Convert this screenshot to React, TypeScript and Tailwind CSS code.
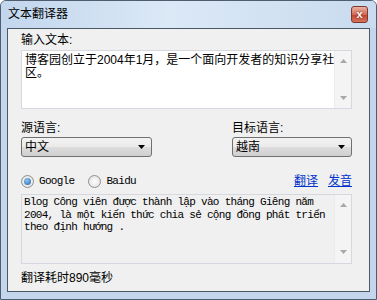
import { useState } from "react";

const cjk = { fontFamily: '"Liberation Sans", "Noto Sans CJK SC", sans-serif' };
const mono = { fontFamily: '"Liberation Mono", "DejaVu Sans Mono", "Noto Sans CJK SC", monospace' };

// Small grey triangle used by the scrollbars and combo boxes
function Arrow({ up, color = "#a8a8a8" }: { up?: boolean; color?: string }) {
  return (
    <svg width="7" height="4" viewBox="0 0 7 4">
      <path d={up ? "M0 4 L3.5 0 L7 4 Z" : "M0 0 L7 0 L3.5 4 Z"} fill={color} />
    </svg>
  );
}

function ScrollTrack({ upTop, downBottom }: { upTop: number; downBottom: number }) {
  return (
    <div className="relative w-[17px] h-full bg-[#f4f4f4] border-l border-[#ececec]">
      <div className="absolute left-[5px]" style={{ top: upTop }}>
        <Arrow up />
      </div>
      <div className="absolute left-[5px]" style={{ bottom: downBottom }}>
        <Arrow />
      </div>
    </div>
  );
}

function Combo({ value, width }: { value: string; width: string }) {
  return (
    <div
      className={`${width} h-[20px] flex items-center justify-between pl-[3px] pr-[6px] border border-[#707070] rounded-[3px] bg-[linear-gradient(#f2f2f2_0%,#ebebeb_50%,#dddddd_51%,#cfcfcf_100%)] text-[12px] leading-[14px] text-black`}
      style={cjk}
    >
      <span>{value}</span>
      <Arrow color="#000" />
    </div>
  );
}

function Radio({ checked, label, onClick }: { checked: boolean; label: string; onClick: () => void }) {
  return (
    <div className="flex items-center gap-[5px] cursor-default" onClick={onClick}>
      <div className="w-[13px] h-[13px] rounded-full border border-[#8f8f8f] bg-[radial-gradient(#ffffff,#dcdcdc)] flex items-center justify-center">
        {checked && <div className="w-[7px] h-[7px] rounded-full bg-[radial-gradient(circle_at_40%_35%,#8ec8f2,#1f5fa8)]" />}
      </div>
      <span className="text-[11px] tracking-[-0.7px] leading-[13px] text-black" style={mono}>
        {label}
      </span>
    </div>
  );
}

export default function App() {
  const [engine, setEngine] = useState("google");

  return (
    <div className="w-[377px] h-[300px] border border-[#4f5d6e] rounded-t-[6px] bg-[#c3d6ec] flex flex-col px-[6px] pb-[7px]">
      {/* title bar */}
      <div className="h-[27px] flex items-start justify-between bg-[linear-gradient(90deg,#c2d6ed,#dbe8f6_45%,#c9dbef)] -mx-[6px] px-[6px] rounded-t-[5px]">
        <span className="mt-[5px] ml-[1px] text-[12px] leading-[16px] text-black" style={cjk}>
          文本翻译器
        </span>
        <div className="mt-[5px] mr-[2px] w-[17px] h-[17px] rounded-[3px] border border-[#7e3a30] bg-[linear-gradient(#eab3a3,#d46b55_50%,#c2432c_51%,#d6745c)] flex items-center justify-center">
          <span className="text-[11px] leading-[11px] font-bold text-white [text-shadow:0_0_2px_#5a1a10]" style={cjk}>
            x
          </span>
        </div>
      </div>

      {/* client area */}
      <div className="flex-1 border border-[#4a5868] bg-[#f0f0f0] flex flex-col pl-[13px] pr-[16px]">
        <div className="mt-[4px] text-[12px] leading-[14px] text-black" style={cjk}>
          输入文本:
        </div>
        <div className="mt-[3px] h-[59px] w-[331px] border border-[#d5d9df] bg-white flex">
          <div className="flex-1 min-w-0 overflow-hidden pl-[3px] pt-[3px] text-[12px] leading-[13px] text-black whitespace-nowrap" style={cjk}>
            博客园创立于2004年1月，是一个面向开发者的知识分享社
            <br />
            区。
          </div>
          <ScrollTrack upTop={8} downBottom={8} />
        </div>

        <div className="mt-[12px] flex justify-between w-[331px]">
          <div className="flex flex-col gap-[2px]">
            <span className="text-[12px] leading-[14px] text-black" style={cjk}>
              源语言:
            </span>
            <Combo value="中文" width="w-[131px]" />
          </div>
          <div className="flex flex-col gap-[2px]">
            <span className="text-[12px] leading-[14px] text-black" style={cjk}>
              目标语言:
            </span>
            <Combo value="越南" width="w-[120px]" />
          </div>
        </div>

        <div className="mt-[17px] h-[14px] w-[331px] flex items-center justify-between">
          <div className="flex items-center gap-[14px]">
            <Radio checked={engine === "google"} label="Google" onClick={() => setEngine("google")} />
            <Radio checked={engine === "baidu"} label="Baidu" onClick={() => setEngine("baidu")} />
          </div>
          <div className="flex gap-[10px] text-[12px] leading-[14px] text-[#0033cc] underline" style={cjk}>
            <span>翻译</span>
            <span>发音</span>
          </div>
        </div>

        <div className="mt-[6px] h-[70px] w-[331px] border border-[#d5d9df] bg-[#f0f0f0] flex">
          <div className="flex-1 pl-[2px] pt-[1px] text-[11px] leading-[12.5px] tracking-[-0.7px] text-black whitespace-pre" style={mono}>
            {"Blog Công viên được thành lập vào tháng Giêng năm\n2004, là một kiến thức chia sẻ cộng đồng phát triển\ntheo định hướng ."}
          </div>
          <ScrollTrack upTop={8} downBottom={9} />
        </div>

        <div className="mt-[7px] text-[12px] leading-[14px] text-black" style={cjk}>
          翻译耗时890毫秒
        </div>
      </div>
    </div>
  );
}
